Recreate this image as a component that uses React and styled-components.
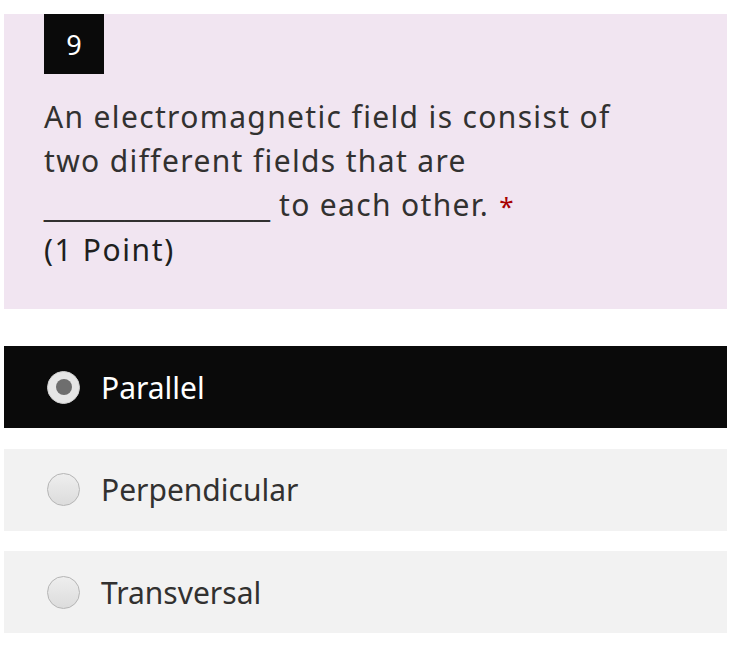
import React from 'react';
import styled, { createGlobalStyle } from 'styled-components';

const GlobalStyle = createGlobalStyle`
  body {
    margin: 0;
    background: #ffffff;
    font-family: 'Noto Sans', 'Open Sans', sans-serif;
  }
`;

const Page = styled.div`
  width: 729px;
  padding: 14px 2px 0 4px;
  box-sizing: border-box;
`;

const QuestionCard = styled.div`
  background-color: #f1e5f1;
  padding: 0 40px 37px 40px;
  margin-bottom: 37px;
`;

const Badge = styled.div`
  width: 60px;
  height: 60px;
  background-color: #0a0a0a;
  color: #ffffff;
  font-size: 27px;
  display: flex;
  align-items: center;
  justify-content: center;
`;

const Title = styled.div`
  margin-top: 21px;
  max-width: 600px;
  color: #323130;
  font-size: 30px;
  line-height: 44px;
  letter-spacing: 1.35px;
`;

const Blank = styled.span`
  font-family: 'Liberation Sans', Arial, sans-serif;
  font-size: 29px;
  letter-spacing: 0;
`;

const Required = styled.span`
  color: #a80000;
  font-size: 26px;
  margin-left: 10px;
`;

const Points = styled.div`
  color: #201f1e;
  font-size: 30px;
  line-height: 44px;
  letter-spacing: 1.6px;
`;

const Options = styled.div`
  display: flex;
  flex-direction: column;
  gap: 20.5px;
`;

const Option = styled.label`
  display: flex;
  align-items: center;
  height: 82px;
  padding-left: 43px;
  background-color: ${({ selected }) => (selected ? '#0a0a0a' : '#f2f2f2')};
  color: ${({ selected }) => (selected ? '#ffffff' : '#323130')};
  font-size: 30px;
`;

const Radio = styled.span`
  width: 33px;
  height: 33px;
  border-radius: 50%;
  box-sizing: border-box;
  border: 1px solid ${({ checked }) => (checked ? '#d0d0d0' : '#b5b5b5')};
  background: ${({ checked }) =>
    checked ? '#e6e6e6' : 'linear-gradient(#eeeeee, #dcdcdc)'};
  display: flex;
  align-items: center;
  justify-content: center;
  margin-right: 21px;

  &::after {
    content: '';
    display: ${({ checked }) => (checked ? 'block' : 'none')};
    width: 16px;
    height: 16px;
    border-radius: 50%;
    background: #6e6e6e;
  }
`;

const options = ['Parallel', 'Perpendicular', 'Transversal'];

export default function App() {
  return (
    <Page>
      <GlobalStyle />
      <QuestionCard>
        <Badge>9</Badge>
        <Title>
          An electromagnetic field is consist of two different fields that are{' '}
          <Blank>______________</Blank> to each other.
          <Required>*</Required>
        </Title>
        <Points>(1 Point)</Points>
      </QuestionCard>
      <Options>
        {options.map((o, i) => (
          <Option key={o} selected={i === 0}>
            <Radio checked={i === 0} />
            {o}
          </Option>
        ))}
      </Options>
    </Page>
  );
}
